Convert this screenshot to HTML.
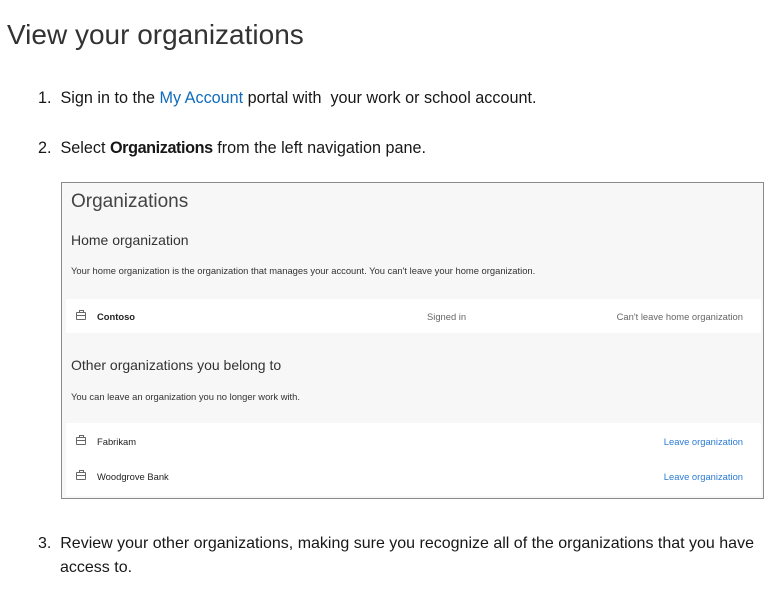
<!DOCTYPE html>
<html><head><style>
body{margin:0;width:776px;height:591px;background:#fff;font-family:"Liberation Sans",sans-serif;color:#171717;position:relative;overflow:hidden}
.a{position:absolute;white-space:nowrap}
h1{position:absolute;left:7px;top:19px;margin:0;font-weight:normal;font-size:28px;color:#333}
.p{font-size:16.2px;color:#171717}
.box{position:absolute;left:61px;top:182px;width:701px;height:315px;border:1px solid #8a8a8a;background:#f7f7f7}
.w{position:absolute;background:#fff;left:4px;right:2px}
.s{font-size:9.4px;color:#333}
.ic{position:absolute;width:8px;height:6px;border:1px solid #666;border-radius:1px}
.ic:before{content:"";position:absolute;left:2px;top:-3px;width:3px;height:2px;border:1px solid #666;border-bottom:0}
.ic:after{content:"";position:absolute;left:0;top:2px;width:8px;border-top:1px solid #666}
.lk{color:#2b7bd3;font-size:9.4px}
</style></head><body>
<h1>View your organizations</h1>
<div class="a p" style="left:38px;top:89px">1.&nbsp;&nbsp;Sign in to the <span style="color:#0f6cbd">My Account</span> portal with&nbsp; your work or school account.</div>
<div class="a p" style="left:38px;top:139px">2.&nbsp;&nbsp;Select <b style="letter-spacing:-0.4px">Organizations</b> from the left navigation pane.</div>
<div class="box">
<div class="a" style="left:9px;top:8px;font-size:19px;color:#444">Organizations</div>
<div class="a" style="left:9px;top:49px;font-size:14px;color:#333">Home organization</div>
<div class="a s" style="left:9px;top:82px">Your home organization is the organization that manages your account. You can't leave your home organization.</div>
<div class="w" style="top:116px;height:34px">
<div class="ic" style="left:10px;top:13px"></div>
<div class="a s" style="left:31px;top:12px;font-weight:bold;color:#222">Contoso</div>
<div class="a s" style="left:361px;top:12px;color:#666">Signed in</div>
<div class="a s" style="right:18px;top:12px;color:#666">Can't leave home organization</div>
</div>
<div class="a" style="left:9px;top:174px;font-size:14px;color:#333">Other organizations you belong to</div>
<div class="a s" style="left:9px;top:208px">You can leave an organization you no longer work with.</div>
<div class="w" style="top:240px;height:73px">
<div class="ic" style="left:10px;top:14px"></div>
<div class="a s" style="left:31px;top:13px;color:#222">Fabrikam</div>
<div class="a lk" style="right:18px;top:13px">Leave organization</div>
<div class="ic" style="left:10px;top:49px"></div>
<div class="a s" style="left:31px;top:48px;color:#222">Woodgrove Bank</div>
<div class="a lk" style="right:18px;top:48px">Leave organization</div>
</div>
</div>
<div class="a p" style="left:38px;top:535px;font-size:16px">3.&nbsp;&nbsp;Review your other organizations, making sure you recognize all of the organizations that you have</div>
<div class="a p" style="left:60px;top:559px;font-size:16px">access to.</div>
</body></html>
